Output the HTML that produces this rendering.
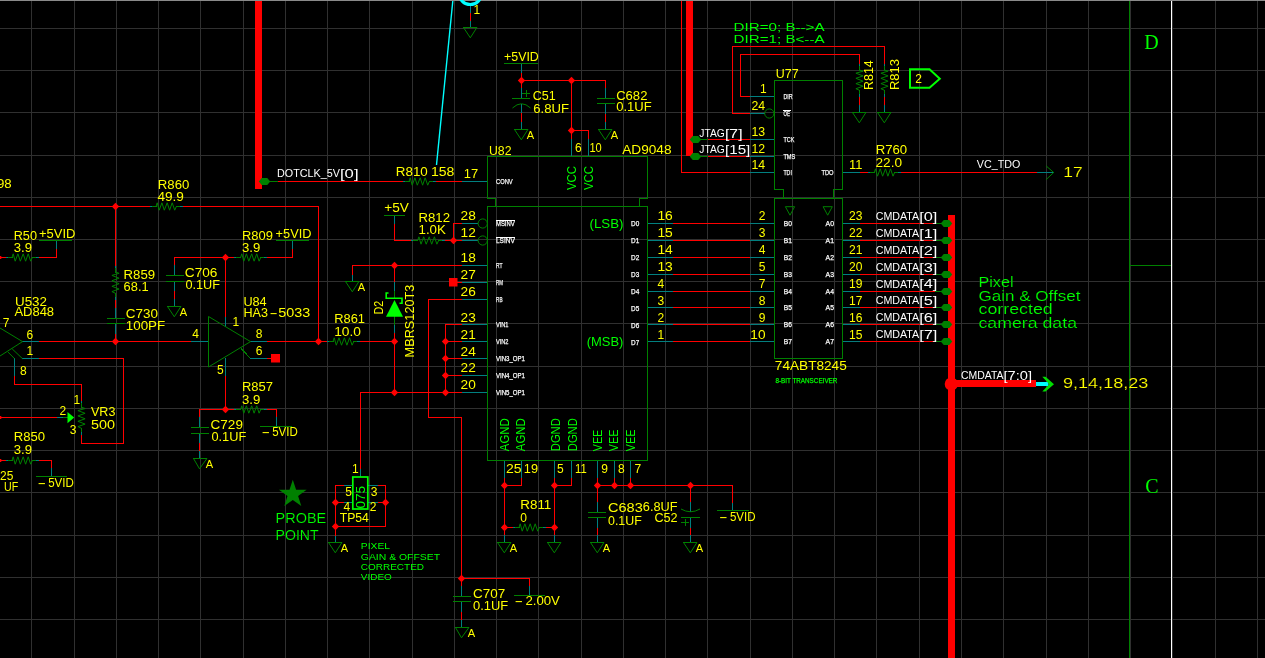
<!DOCTYPE html>
<html><head><meta charset="utf-8"><title>Schematic</title>
<style>html,body{margin:0;padding:0;background:#000;overflow:hidden}svg{display:block;will-change:transform}text{white-space:pre}</style></head><body>
<svg width="1265" height="658" viewBox="0 0 1265 658">
<rect width="1265" height="658" fill="#000"/>
<rect x="0" y="0" width="1265" height="1" fill="#8a8a8a"/>
<path d="M31.5 1V659M74.5 1V659M116.5 1V659M158.5 1V659M200.5 1V659M243.5 1V659M285.5 1V659M327.5 1V659M369.5 1V659M412.5 1V659M454.5 1V659M496.5 1V659M538.5 1V659M581.5 1V659M623.5 1V659M665.5 1V659M707.5 1V659M750.5 1V659M792.5 1V659M834.5 1V659M876.5 1V659M919.5 1V659M961.5 1V659M1003.5 1V659M1046.5 1V659M1088.5 1V659M1130.5 1V659M1172.5 1V659M1215.5 1V659M1257.5 1V659M0 28.5H1266M0 70.5H1266M0 112.5H1266M0 155.5H1266M0 197.5H1266M0 239.5H1266M0 281.5H1266M0 323.5H1266M0 366.5H1266M0 408.5H1266M0 450.5H1266M0 492.5H1266M0 535.5H1266M0 577.5H1266M0 619.5H1266" fill="none" stroke="#303030" stroke-width="1" shape-rendering="crispEdges"/>
<path d="M277 181.5H404M436 181.5H463M0 206.5H151M183 206.5H319M318.5 206V342M115.5 206V267M115.5 300V309M115.5 333V342M0 257.5H7M39 257.5H57M56.5 248V258M225 257.5H235M267 257.5H293M292.5 248V258M174 257.5H226M174.5 257V266M174.5 290V300M225.5 257V318M38 341.5H192M38 358.5H124M123.5 358V444M81 443.5H124M81.5 435V444M14.5 375V385M14 384.5H82M81.5 384V402M0 417.5H58M266 341.5H328M266 358.5H272M225.5 375V410M199 409.5H226M199.5 409V418M199.5 442V452M225 409.5H235M267 409.5H277M276.5 409V418M0 460.5H7M39 460.5H52M51.5 460V469M470.5 12V22M521.5 72V90M521 80.5H606M605.5 80V89M521.5 112V122M605.5 113V122M571.5 80V140M571 130.5H589M588.5 130V140M673 223.5H750M673 240.5H750M673 257.5H750M673 274.5H750M673 291.5H750M673 307.5H750M673 324.5H750M673 341.5H750M504.5 477V486M521.5 477V486M554.5 477V486M571.5 477V486M597.5 477V486M614.5 477V486M630.5 477V486M394.5 223V241M394 240.5H412M445 240.5H463M453.5 223V241M453 223.5H463M352 265.5H463M352.5 265V276M394.5 265V283M394.5 332V393M360 341.5H395M457 282.5H463M428 299.5H463M428.5 299V418M428 417.5H462M461.5 417V587M445 324.5H463M445.5 324V393M445 341.5H463M445 358.5H463M445 375.5H463M445 392.5H463M360 392.5H446M360.5 392V470M335 485.5H345M335.5 485V537M377 485.5H386M385.5 485V527M335 526.5H386M335 502.5H345M377 502.5H386M504 485.5H522M504.5 485V536M554 485.5H572M554.5 485V536M504 527.5H514M546 527.5H555M597 485.5H733M732.5 485V504M597.5 485V503M597.5 527V537M690.5 485V503M690.5 527V537M461 578.5H530M529.5 578V587M461.5 611V620M681.5 1V173M681 172.5H751M707 139.5H751M707 156.5H751M740 96.5H751M740.5 54V97M740 54.5H860M859.5 54V65M732 113.5H751M732.5 46V114M732 46.5H885M884.5 46V65M859.5 97V106M884.5 97V106M859 172.5H869M901 172.5H1037M859 223.5H936M859 240.5H936M859 257.5H936M859 274.5H936M859 291.5H936M859 307.5H936M859 324.5H936M859 341.5H936" fill="none" stroke="#ff0000" stroke-width="1" shape-rendering="crispEdges"/>
<path d="M403 181.5H406M433 181.5H436M462 181.5H488M150 206.5H153M180 206.5H183M115.5 266V269M115.5 297V300M115.5 308V319M115.5 323V334M6 257.5H9M36 257.5H39M56.5 241V249M234 257.5H237M264 257.5H267M292.5 241V249M174.5 265V276M174.5 281V291M174.5 299V307M225.5 317V327M22 341.5H39M191 341.5H209M22 358.5H39M14.5 358V376M81.5 401V404M81.5 432V435M57 417.5H64M250 341.5H267M250 358.5H267M225.5 358V376M199.5 417V428M199.5 433V443M199.5 451V459M234 409.5H237M264 409.5H267M276.5 417V427M6 460.5H9M36 460.5H39M51.5 468V477M470.5 5V13M470.5 21V28M521.5 63V73M521.5 88V99M521.5 104V113M521.5 122V130M605.5 88V99M605.5 103V114M605.5 122V130M571.5 139V157M588.5 139V157M462 223.5H478M462 240.5H478M462 265.5H488M462 282.5H488M462 299.5H488M462 324.5H488M462 341.5H488M462 358.5H488M462 375.5H488M462 392.5H488M648 223.5H673M750 223.5H775M648 240.5H673M750 240.5H775M648 257.5H673M750 257.5H775M648 274.5H673M750 274.5H775M648 291.5H673M750 291.5H775M648 307.5H673M750 307.5H775M648 324.5H673M750 324.5H775M648 341.5H673M750 341.5H775M504.5 460V478M521.5 460V478M554.5 460V478M571.5 460V478M597.5 460V478M614.5 460V478M630.5 460V478M394.5 215V224M411 240.5H414M442 240.5H445M352.5 275V282M394.5 282V292M394.5 324V333M327 341.5H330M357 341.5H360M360.5 469V477M335.5 536V543M344 485.5H353M368 485.5H378M344 502.5H353M368 502.5H378M513 527.5H516M543 527.5H546M504.5 535V543M554.5 535V543M732.5 503V511M597.5 502V513M597.5 517V528M597.5 535V543M690.5 502V512M690.5 517V528M690.5 535V543M529.5 586V596M461.5 586V597M461.5 601V612M461.5 620V628M750 172.5H775M750 139.5H775M750 156.5H775M750 96.5H775M750 113.5H765M859.5 64V67M859.5 94V97M859.5 105V113M884.5 64V67M884.5 94V97M884.5 105V113M843 172.5H860M868 172.5H871M898 172.5H901M1037 172.5H1054M843 223.5H860M843 240.5H860M843 257.5H860M843 274.5H860M843 291.5H860M843 307.5H860M843 324.5H860M843 341.5H860" fill="none" stroke="#008080" stroke-width="1" shape-rendering="crispEdges"/>
<path d="M1129.5 1V659M1129 265.5H1172M264 181.5H278M405 181.5H410M429 181.5H433M152 206.5H157M176 206.5H180M115.5 268V273M115.5 293V297M107 318.5H125M107 323.5H125M8 257.5H13M32 257.5H36M39 240.5H72M236 257.5H241M260 257.5H264M276 240.5H309M166 275.5H184M166 281.5H184M167 306.5H181M81.5 403V408M81.5 428V432M63 417.5H68M240.7 347.9L250.3 358.3M191 427.5H209M191 433.5H209M193 458.5H207M236 409.5H241M260 409.5H264M260 426.5H292M8 460.5H13M32 460.5H36M36 476.5H67M463 27.5H477M504 63.5H538M512 98.5H530M514 129.5H528M597 98.5H615M597 103.5H615M598 129.5H612M384 215.5H405M413 240.5H418M438 240.5H442M345 281.5H359M394.5 291V299M394.5 316V325M329 341.5H334M353 341.5H357M328 542.5H342M515 527.5H520M539 527.5H543M497 542.5H511M547 542.5H561M717 510.5H749M588 512.5H606M588 517.5H606M590 542.5H604M681 517.5H700M683 542.5H697M514 595.5H545M453 596.5H471M453 601.5H471M455 627.5H469M695 139.5H708M695 156.5H708M859.5 66V71M859.5 90V94M852 112.5H866M884.5 66V71M884.5 90V94M877 112.5H891M870 172.5H875M894 172.5H898M935 223.5H943M935 240.5H943M935 257.5H943M935 274.5H943M935 291.5H943M935 307.5H943M935 324.5H943M935 341.5H943" fill="none" stroke="#008000" stroke-width="1" shape-rendering="crispEdges"/>
<path d="M1171.5 1V659M496 220.5H515M496 237.5H515M783 110.5H791" fill="none" stroke="#ffffff" stroke-width="1" shape-rendering="crispEdges"/>
<rect x="255" y="1" width="7" height="188" fill="#ff0000"/>
<rect x="686" y="1" width="7" height="155" fill="#ff0000"/>
<rect x="948" y="215" width="7" height="443" fill="#ff0000"/>
<rect x="951" y="380" width="85" height="7" fill="#ff0000"/>
<circle cx="951.3" cy="384" r="6.6" fill="#ff0000"/>
<rect x="1036" y="382" width="12.5" height="4" fill="#00ffff"/>
<path d="M1042.3 376.8L1045.5 376.8L1054 384.2L1045.5 391.6L1042.3 391.6L1049.3 384.2Z" fill="#00dd00"/>
<path d="M409.0 181.5L410.2 177.8L412.2 185.2L414.9 177.8L417.3 185.2L420.2 177.8L422.6 185.2L425.2 177.8L427.7 185.2L429.3 181.5" fill="none" stroke="#008000" stroke-width="1"/>
<path d="M258.75 181.5l3 -3.5h5.5l3 3.5l-3 3.5h-5.5z" fill="#008000"/>
<path d="M115.5 202.8l3.7 3.7l-3.7 3.7l-3.7 -3.7z" fill="#ff0000"/>
<path d="M156.0 206.5L157.2 202.8L159.2 210.2L161.9 202.8L164.3 210.2L167.2 202.8L169.6 210.2L172.2 202.8L174.7 210.2L176.3 206.5" fill="none" stroke="#008000" stroke-width="1"/>
<path d="M115.5 272.0L119.1 273.3L111.9 275.4L119.1 278.2L111.9 280.7L119.1 283.7L111.9 286.3L119.1 289.0L111.9 291.6L115.5 293.3" fill="none" stroke="#008000" stroke-width="1"/>
<rect x="0" y="256" width="1.3" height="3" fill="#ff0000"/>
<path d="M12.0 257.5L13.2 253.8L15.2 261.2L17.9 253.8L20.3 261.2L23.2 253.8L25.6 261.2L28.2 253.8L30.7 261.2L32.3 257.5" fill="none" stroke="#008000" stroke-width="1"/>
<path d="M225.5 253.8l3.7 3.7l-3.7 3.7l-3.7 -3.7z" fill="#ff0000"/>
<path d="M240.6 257.5L241.8 253.8L243.8 261.2L246.4 253.8L248.8 261.2L251.7 253.8L254.1 261.2L256.7 253.8L259.1 261.2L260.7 257.5" fill="none" stroke="#008000" stroke-width="1"/>
<path d="M167.5 306.5L174.3 316.8L180.9 306.5" fill="none" stroke="#008000" stroke-width="1"/>
<path d="M208.5 316.5V367L250.5 341.6Z" fill="none" stroke="#008000" stroke-width="1"/>
<path d="M0 328L22.5 341.6L0 356M12.2 348.9L22.5 358.7M7.9 352L14.6 358.7" fill="none" stroke="#008000" stroke-width="1"/>
<path d="M115.5 337.8l3.7 3.7l-3.7 3.7l-3.7 -3.7z" fill="#ff0000"/>
<path d="M81.5 407.2L85.1 408.5L77.9 410.6L85.1 413.3L77.9 415.9L85.1 418.8L77.9 421.3L85.1 424.1L77.9 426.6L81.5 428.3" fill="none" stroke="#008000" stroke-width="1"/>
<rect x="0" y="416" width="1.3" height="3" fill="#ff0000"/>
<path d="M67.5 412L74.2 417.6L67.5 423.2Z" fill="#00ff00"/>
<path d="M318.5 337.8l3.7 3.7l-3.7 3.7l-3.7 -3.7z" fill="#ff0000"/>
<rect x="271" y="354" width="9" height="8.5" fill="#ff0000"/>
<path d="M225.5 405.8l3.7 3.7l-3.7 3.7l-3.7 -3.7z" fill="#ff0000"/>
<path d="M193.5 458.5L199.5 468.8L206.9 458.5" fill="none" stroke="#008000" stroke-width="1"/>
<path d="M240.6 409.5L241.8 405.8L243.8 413.2L246.4 405.8L248.8 413.2L251.7 405.8L254.1 413.2L256.7 405.8L259.1 413.2L260.7 409.5" fill="none" stroke="#008000" stroke-width="1"/>
<rect x="0" y="459" width="1.3" height="3" fill="#ff0000"/>
<path d="M12.0 460.5L13.2 456.8L15.2 464.2L17.9 456.8L20.3 464.2L23.2 456.8L25.6 464.2L28.2 456.8L30.7 464.2L32.3 460.5" fill="none" stroke="#008000" stroke-width="1"/>
<path d="M292.8 479.8L296.1 489.8L306.6 489.8L298.1 496.0L301.3 506.0L292.8 499.9L284.3 506.0L287.5 496.0L279.0 489.8L289.5 489.8Z" fill="#008000"/>
<circle cx="470.3" cy="-6.6" r="11.2" fill="none" stroke="#00ffff" stroke-width="3"/>
<path d="M452.8 1L436.5 165" stroke="#00ffff" stroke-width="1.4" fill="none"/>
<path d="M463.5 27.5L470.3 37.8L476.9 27.5" fill="none" stroke="#008000" stroke-width="1"/>
<path d="M521.5 76.8l3.7 3.7l-3.7 3.7l-3.7 -3.7z" fill="#ff0000"/>
<path d="M571.5 76.8l3.7 3.7l-3.7 3.7l-3.7 -3.7z" fill="#ff0000"/>
<path d="M512.5 108Q521.5 99.5 530.5 108" fill="none" stroke="#008000" stroke-width="1"/>
<path d="M522 93.5h8M526.5 90v7" fill="none" stroke="#008000" stroke-width="1" shape-rendering="crispEdges"/>
<path d="M514.5 129.5L521.3 139.8L527.9 129.5" fill="none" stroke="#008000" stroke-width="1"/>
<path d="M598.5 129.5L605.3 139.8L611.9 129.5" fill="none" stroke="#008000" stroke-width="1"/>
<path d="M571.5 126.8l3.7 3.7l-3.7 3.7l-3.7 -3.7z" fill="#ff0000"/>
<path d="M487.5 156.5H647.5V198.5H639.5V206.5H647.5V460.5H487.5V206.5H495.5V198.5H487.5Z M495.5 206.5H639.5" fill="none" stroke="#008000" stroke-width="1" shape-rendering="crispEdges"/>
<circle cx="482.7" cy="223.5" r="4.6" fill="none" stroke="#008000" stroke-width="1"/>
<circle cx="482.7" cy="240.5" r="4.6" fill="none" stroke="#008000" stroke-width="1"/>
<path d="M417.6 240.5L418.9 236.8L421.0 244.2L423.7 236.8L426.2 244.2L429.2 236.8L431.7 244.2L434.4 236.8L436.9 244.2L438.6 240.5" fill="none" stroke="#008000" stroke-width="1"/>
<path d="M453.5 236.8l3.7 3.7l-3.7 3.7l-3.7 -3.7z" fill="#ff0000"/>
<path d="M394.5 261.8l3.7 3.7l-3.7 3.7l-3.7 -3.7z" fill="#ff0000"/>
<path d="M345.5 281.5L352.3 291.8L358.9 281.5" fill="none" stroke="#008000" stroke-width="1"/>
<path d="M388.5 293H386.2V298.2H402V303.2H399.5" fill="none" stroke="#00ff00" stroke-width="1.6"/>
<path d="M394.5 300L403 316.8H386Z" fill="#00ff00"/>
<path d="M394.5 337.8l3.7 3.7l-3.7 3.7l-3.7 -3.7z" fill="#ff0000"/>
<path d="M394.5 388.8l3.7 3.7l-3.7 3.7l-3.7 -3.7z" fill="#ff0000"/>
<path d="M333.0 341.5L334.2 337.8L336.3 345.2L339.0 337.8L341.5 345.2L344.4 337.8L346.9 345.2L349.6 337.8L352.1 345.2L353.8 341.5" fill="none" stroke="#008000" stroke-width="1"/>
<rect x="449" y="278" width="8.5" height="8.5" fill="#ff0000"/>
<path d="M445.5 337.8l3.7 3.7l-3.7 3.7l-3.7 -3.7z" fill="#ff0000"/>
<path d="M445.5 354.8l3.7 3.7l-3.7 3.7l-3.7 -3.7z" fill="#ff0000"/>
<path d="M445.5 371.8l3.7 3.7l-3.7 3.7l-3.7 -3.7z" fill="#ff0000"/>
<path d="M445.5 388.8l3.7 3.7l-3.7 3.7l-3.7 -3.7z" fill="#ff0000"/>
<rect x="352.8" y="477" width="15" height="32" fill="none" stroke="#00ff00" stroke-width="1.7"/>
<path d="M335.5 498.8l3.7 3.7l-3.7 3.7l-3.7 -3.7z" fill="#ff0000"/>
<path d="M385.5 498.8l3.7 3.7l-3.7 3.7l-3.7 -3.7z" fill="#ff0000"/>
<path d="M335.5 522.8l3.7 3.7l-3.7 3.7l-3.7 -3.7z" fill="#ff0000"/>
<path d="M328.5 542.5L335.3 552.8L341.9 542.5" fill="none" stroke="#008000" stroke-width="1"/>
<path d="M504.5 481.8l3.7 3.7l-3.7 3.7l-3.7 -3.7z" fill="#ff0000"/>
<path d="M504.5 523.8l3.7 3.7l-3.7 3.7l-3.7 -3.7z" fill="#ff0000"/>
<path d="M554.5 481.8l3.7 3.7l-3.7 3.7l-3.7 -3.7z" fill="#ff0000"/>
<path d="M554.5 523.8l3.7 3.7l-3.7 3.7l-3.7 -3.7z" fill="#ff0000"/>
<path d="M519.0 527.5L520.2 523.8L522.2 531.2L524.9 523.8L527.3 531.2L530.2 523.8L532.6 531.2L535.2 523.8L537.7 531.2L539.3 527.5" fill="none" stroke="#008000" stroke-width="1"/>
<path d="M497.5 542.5L504.3 552.8L510.9 542.5" fill="none" stroke="#008000" stroke-width="1"/>
<path d="M547.5 542.5L554.3 552.8L560.9 542.5" fill="none" stroke="#008000" stroke-width="1"/>
<path d="M597.5 481.8l3.7 3.7l-3.7 3.7l-3.7 -3.7z" fill="#ff0000"/>
<path d="M614.5 481.8l3.7 3.7l-3.7 3.7l-3.7 -3.7z" fill="#ff0000"/>
<path d="M630.5 481.8l3.7 3.7l-3.7 3.7l-3.7 -3.7z" fill="#ff0000"/>
<path d="M690.5 481.8l3.7 3.7l-3.7 3.7l-3.7 -3.7z" fill="#ff0000"/>
<path d="M590.5 542.5L597.3 552.8L603.9 542.5" fill="none" stroke="#008000" stroke-width="1"/>
<path d="M681 509Q690.5 514.5 700 509" fill="none" stroke="#008000" stroke-width="1"/>
<path d="M683.5 542.5L690.3 552.8L696.9 542.5" fill="none" stroke="#008000" stroke-width="1"/>
<path d="M681 522.5h8M685.5 519v7" fill="none" stroke="#008000" stroke-width="1" shape-rendering="crispEdges"/>
<path d="M461.5 574.8l3.7 3.7l-3.7 3.7l-3.7 -3.7z" fill="#ff0000"/>
<path d="M455.5 627.5L461.5 637.8L468.9 627.5" fill="none" stroke="#008000" stroke-width="1"/>
<path d="M774.5 80.5H842.5V189.5H833.5V198.5H842.5V358.5H774.5V198.5H783.5V189.5H774.5Z M783.5 198.5H833.5" fill="none" stroke="#008000" stroke-width="1" shape-rendering="crispEdges"/>
<path d="M689.75 139.5l3 -3.5h5.5l3 3.5l-3 3.5h-5.5z" fill="#008000"/>
<path d="M689.75 156.5l3 -3.5h5.5l3 3.5l-3 3.5h-5.5z" fill="#008000"/>
<circle cx="769.3" cy="113.5" r="4.6" fill="none" stroke="#008000" stroke-width="1"/>
<path d="M859.5 70.0L863.1 71.2L855.9 73.2L863.1 75.9L855.9 78.3L863.1 81.2L855.9 83.6L863.1 86.2L855.9 88.7L859.5 90.3" fill="none" stroke="#008000" stroke-width="1"/>
<path d="M852.5 112.5L859.3 122.8L865.9 112.5" fill="none" stroke="#008000" stroke-width="1"/>
<path d="M884.5 70.0L888.1 71.2L880.9 73.2L888.1 75.9L880.9 78.3L888.1 81.2L880.9 83.6L888.1 86.2L880.9 88.7L884.5 90.3" fill="none" stroke="#008000" stroke-width="1"/>
<path d="M877.5 112.5L884.3 122.8L890.9 112.5" fill="none" stroke="#008000" stroke-width="1"/>
<path d="M910 69.3H929.5L939.8 78.7L929.5 87.8H910Z" fill="none" stroke="#00ff00" stroke-width="2"/>
<path d="M874.3 172.5L875.5 168.8L877.5 176.2L880.2 168.8L882.6 176.2L885.5 168.8L887.9 176.2L890.5 168.8L893.0 176.2L894.6 172.5" fill="none" stroke="#008000" stroke-width="1"/>
<path d="M1046 165.8L1053.7 172.5L1046 179.7" fill="none" stroke="#008000" stroke-width="1"/>
<path d="M785.4 206.7H794.6L790 215.2Z" fill="none" stroke="#008000" stroke-width="1"/>
<path d="M823.1 206.7H832.3L827.7 215.2Z" fill="none" stroke="#008000" stroke-width="1"/>
<path d="M940.75 223.5l3 -3.5h5.5l3 3.5l-3 3.5h-5.5z" fill="#008000"/>
<path d="M940.75 240.5l3 -3.5h5.5l3 3.5l-3 3.5h-5.5z" fill="#008000"/>
<path d="M940.75 257.5l3 -3.5h5.5l3 3.5l-3 3.5h-5.5z" fill="#008000"/>
<path d="M940.75 274.5l3 -3.5h5.5l3 3.5l-3 3.5h-5.5z" fill="#008000"/>
<path d="M940.75 291.5l3 -3.5h5.5l3 3.5l-3 3.5h-5.5z" fill="#008000"/>
<path d="M940.75 307.5l3 -3.5h5.5l3 3.5l-3 3.5h-5.5z" fill="#008000"/>
<path d="M940.75 324.5l3 -3.5h5.5l3 3.5l-3 3.5h-5.5z" fill="#008000"/>
<path d="M940.75 341.5l3 -3.5h5.5l3 3.5l-3 3.5h-5.5z" fill="#008000"/>
<text x="1144.3" y="48.6" font-size="20" fill="#00ff00" font-family='"Liberation Serif",serif'>D</text>
<text x="1145.3" y="493" font-size="20" fill="#00ff00" font-family='"Liberation Serif",serif'>C</text>
<text x="277" y="177" font-size="10.6" fill="#ffffff" font-family='"Liberation Sans",sans-serif' textLength="63" lengthAdjust="spacingAndGlyphs">DOTCLK_5V</text>
<text x="340" y="178" font-size="12" fill="#ffffff" font-family='"Liberation Sans",sans-serif' textLength="18.5" lengthAdjust="spacingAndGlyphs">[0]</text>
<text x="395.8" y="175.6" font-size="12" fill="#ffff00" font-family='"Liberation Sans",sans-serif' textLength="32" lengthAdjust="spacingAndGlyphs">R810</text>
<text x="431" y="175.6" font-size="12" fill="#ffff00" font-family='"Liberation Sans",sans-serif' textLength="23.4" lengthAdjust="spacingAndGlyphs">158</text>
<text x="463.8" y="178.3" font-size="12" fill="#ffff00" font-family='"Liberation Sans",sans-serif' textLength="14.4" lengthAdjust="spacingAndGlyphs">17</text>
<text x="-3" y="188.2" font-size="12" fill="#ffff00" font-family='"Liberation Sans",sans-serif' textLength="14.7" lengthAdjust="spacingAndGlyphs">98</text>
<text x="157.8" y="188.6" font-size="12" fill="#ffff00" font-family='"Liberation Sans",sans-serif' textLength="31.5" lengthAdjust="spacingAndGlyphs">R860</text>
<text x="157.4" y="200.6" font-size="12" fill="#ffff00" font-family='"Liberation Sans",sans-serif' textLength="26.5" lengthAdjust="spacingAndGlyphs">49.9</text>
<text x="123.6" y="279" font-size="12" fill="#ffff00" font-family='"Liberation Sans",sans-serif' textLength="31.5" lengthAdjust="spacingAndGlyphs">R859</text>
<text x="123.6" y="291.3" font-size="12" fill="#ffff00" font-family='"Liberation Sans",sans-serif' textLength="25" lengthAdjust="spacingAndGlyphs">68.1</text>
<text x="125.8" y="318.1" font-size="12" fill="#ffff00" font-family='"Liberation Sans",sans-serif' textLength="32.2" lengthAdjust="spacingAndGlyphs">C730</text>
<text x="125.8" y="330" font-size="12" fill="#ffff00" font-family='"Liberation Sans",sans-serif' textLength="39.4" lengthAdjust="spacingAndGlyphs">100PF</text>
<text x="13.7" y="239.6" font-size="12.3" fill="#ffff00" font-family='"Liberation Sans",sans-serif' textLength="23.3" lengthAdjust="spacingAndGlyphs">R50</text>
<text x="39" y="238" font-size="12.3" fill="#ffff00" font-family='"Liberation Sans",sans-serif' textLength="36.4" lengthAdjust="spacingAndGlyphs">+5VID</text>
<text x="13.7" y="251.9" font-size="12.3" fill="#ffff00" font-family='"Liberation Sans",sans-serif' textLength="18.3" lengthAdjust="spacingAndGlyphs">3.9</text>
<text x="242" y="239.6" font-size="12.3" fill="#ffff00" font-family='"Liberation Sans",sans-serif' textLength="31" lengthAdjust="spacingAndGlyphs">R809</text>
<text x="275.6" y="238" font-size="12.3" fill="#ffff00" font-family='"Liberation Sans",sans-serif' textLength="35.8" lengthAdjust="spacingAndGlyphs">+5VID</text>
<text x="242" y="251.9" font-size="12.3" fill="#ffff00" font-family='"Liberation Sans",sans-serif' textLength="18.3" lengthAdjust="spacingAndGlyphs">3.9</text>
<text x="179.8" y="316" font-size="10.5" fill="#ffff00" font-family='"Liberation Sans",sans-serif' textLength="7.4" lengthAdjust="spacingAndGlyphs">A</text>
<text x="184.8" y="277" font-size="12" fill="#ffff00" font-family='"Liberation Sans",sans-serif' textLength="32.6" lengthAdjust="spacingAndGlyphs">C706</text>
<text x="185.4" y="288.6" font-size="12" fill="#ffff00" font-family='"Liberation Sans",sans-serif' textLength="34.6" lengthAdjust="spacingAndGlyphs">0.1UF</text>
<text x="232.5" y="326.3" font-size="12" fill="#ffff00" font-family='"Liberation Sans",sans-serif'>1</text>
<text x="243.4" y="306.3" font-size="12" fill="#ffff00" font-family='"Liberation Sans",sans-serif' textLength="23.3" lengthAdjust="spacingAndGlyphs">U84</text>
<text x="243.4" y="316.5" font-size="12" fill="#ffff00" font-family='"Liberation Sans",sans-serif' textLength="24.5" lengthAdjust="spacingAndGlyphs">HA3</text>
<text x="269.6" y="316.5" font-size="12" fill="#ffff00" font-family='"Liberation Sans",sans-serif' textLength="8.2" lengthAdjust="spacingAndGlyphs">-</text>
<text x="278.3" y="316.5" font-size="12" fill="#ffff00" font-family='"Liberation Sans",sans-serif' textLength="32" lengthAdjust="spacingAndGlyphs">5033</text>
<text x="15" y="306.3" font-size="12" fill="#ffff00" font-family='"Liberation Sans",sans-serif' textLength="32" lengthAdjust="spacingAndGlyphs">U532</text>
<text x="14.4" y="316.3" font-size="12" fill="#ffff00" font-family='"Liberation Sans",sans-serif' textLength="39.7" lengthAdjust="spacingAndGlyphs">AD848</text>
<text x="2.7" y="326.8" font-size="12" fill="#ffff00" font-family='"Liberation Sans",sans-serif'>7</text>
<text x="26.5" y="338.6" font-size="12" fill="#ffff00" font-family='"Liberation Sans",sans-serif'>6</text>
<text x="26.5" y="354.8" font-size="12" fill="#ffff00" font-family='"Liberation Sans",sans-serif'>1</text>
<text x="20" y="374.5" font-size="12" fill="#ffff00" font-family='"Liberation Sans",sans-serif'>8</text>
<text x="192.3" y="337.7" font-size="12" fill="#ffff00" font-family='"Liberation Sans",sans-serif'>4</text>
<text x="73.5" y="404" font-size="12" fill="#ffff00" font-family='"Liberation Sans",sans-serif'>1</text>
<text x="59.6" y="414.9" font-size="12" fill="#ffff00" font-family='"Liberation Sans",sans-serif'>2</text>
<text x="69.7" y="433.5" font-size="12" fill="#ffff00" font-family='"Liberation Sans",sans-serif'>3</text>
<text x="91" y="416.2" font-size="12" fill="#ffff00" font-family='"Liberation Sans",sans-serif' textLength="24.4" lengthAdjust="spacingAndGlyphs">VR3</text>
<text x="91" y="428.6" font-size="12" fill="#ffff00" font-family='"Liberation Sans",sans-serif' textLength="24" lengthAdjust="spacingAndGlyphs">500</text>
<text x="255.7" y="337.7" font-size="12" fill="#ffff00" font-family='"Liberation Sans",sans-serif'>8</text>
<text x="255.7" y="354.7" font-size="12" fill="#ffff00" font-family='"Liberation Sans",sans-serif'>6</text>
<text x="217" y="374.4" font-size="12" fill="#ffff00" font-family='"Liberation Sans",sans-serif'>5</text>
<text x="205.8" y="468" font-size="10.5" fill="#ffff00" font-family='"Liberation Sans",sans-serif' textLength="7.4" lengthAdjust="spacingAndGlyphs">A</text>
<text x="210.6" y="429.1" font-size="12" fill="#ffff00" font-family='"Liberation Sans",sans-serif' textLength="32.3" lengthAdjust="spacingAndGlyphs">C729</text>
<text x="211.4" y="440.7" font-size="12" fill="#ffff00" font-family='"Liberation Sans",sans-serif' textLength="34.8" lengthAdjust="spacingAndGlyphs">0.1UF</text>
<text x="242" y="391" font-size="12" fill="#ffff00" font-family='"Liberation Sans",sans-serif' textLength="31" lengthAdjust="spacingAndGlyphs">R857</text>
<text x="242" y="404" font-size="12" fill="#ffff00" font-family='"Liberation Sans",sans-serif' textLength="18.3" lengthAdjust="spacingAndGlyphs">3.9</text>
<text x="261.4" y="436.2" font-size="12" fill="#ffff00" font-family='"Liberation Sans",sans-serif' textLength="8.6" lengthAdjust="spacingAndGlyphs">-</text>
<text x="272.2" y="436.2" font-size="12" fill="#ffff00" font-family='"Liberation Sans",sans-serif' textLength="25.6" lengthAdjust="spacingAndGlyphs">5VID</text>
<text x="13.7" y="440.9" font-size="12" fill="#ffff00" font-family='"Liberation Sans",sans-serif' textLength="31.3" lengthAdjust="spacingAndGlyphs">R850</text>
<text x="13.7" y="453.5" font-size="12" fill="#ffff00" font-family='"Liberation Sans",sans-serif' textLength="18.3" lengthAdjust="spacingAndGlyphs">3.9</text>
<text x="37.4" y="487.4" font-size="12" fill="#ffff00" font-family='"Liberation Sans",sans-serif' textLength="8.6" lengthAdjust="spacingAndGlyphs">-</text>
<text x="48.2" y="487.4" font-size="12" fill="#ffff00" font-family='"Liberation Sans",sans-serif' textLength="25.6" lengthAdjust="spacingAndGlyphs">5VID</text>
<text x="0" y="479.8" font-size="12" fill="#ffff00" font-family='"Liberation Sans",sans-serif' textLength="13.3" lengthAdjust="spacingAndGlyphs">25</text>
<text x="4" y="490.5" font-size="12" fill="#ffff00" font-family='"Liberation Sans",sans-serif' textLength="14.2" lengthAdjust="spacingAndGlyphs">UF</text>
<text x="275.6" y="523.3" font-size="14" fill="#00ff00" font-family='"Liberation Sans",sans-serif' textLength="50.6" lengthAdjust="spacingAndGlyphs" stroke="#000" stroke-width="0.15">PROBE</text>
<text x="275.6" y="539.8" font-size="14" fill="#00ff00" font-family='"Liberation Sans",sans-serif' textLength="43" lengthAdjust="spacingAndGlyphs" stroke="#000" stroke-width="0.15">POINT</text>
<text x="473.6" y="14" font-size="12" fill="#ffff00" font-family='"Liberation Sans",sans-serif'>1</text>
<text x="504" y="60.7" font-size="12" fill="#ffff00" font-family='"Liberation Sans",sans-serif' textLength="34.8" lengthAdjust="spacingAndGlyphs">+5VID</text>
<text x="526.8" y="139" font-size="10.5" fill="#ffff00" font-family='"Liberation Sans",sans-serif' textLength="7.4" lengthAdjust="spacingAndGlyphs">A</text>
<text x="532.8" y="100.4" font-size="12" fill="#ffff00" font-family='"Liberation Sans",sans-serif' textLength="23" lengthAdjust="spacingAndGlyphs">C51</text>
<text x="533.3" y="112.6" font-size="12" fill="#ffff00" font-family='"Liberation Sans",sans-serif' textLength="35.8" lengthAdjust="spacingAndGlyphs">6.8UF</text>
<text x="610.8" y="139" font-size="10.5" fill="#ffff00" font-family='"Liberation Sans",sans-serif' textLength="7.4" lengthAdjust="spacingAndGlyphs">A</text>
<text x="616.2" y="100" font-size="12" fill="#ffff00" font-family='"Liberation Sans",sans-serif' textLength="31.2" lengthAdjust="spacingAndGlyphs">C682</text>
<text x="616.2" y="111" font-size="12" fill="#ffff00" font-family='"Liberation Sans",sans-serif' textLength="35.6" lengthAdjust="spacingAndGlyphs">0.1UF</text>
<text x="575" y="151.8" font-size="12" fill="#ffff00" font-family='"Liberation Sans",sans-serif'>6</text>
<text x="589.4" y="151.8" font-size="12" fill="#ffff00" font-family='"Liberation Sans",sans-serif' textLength="12.3" lengthAdjust="spacingAndGlyphs">10</text>
<text x="489" y="154.5" font-size="12" fill="#ffff00" font-family='"Liberation Sans",sans-serif' textLength="22.5" lengthAdjust="spacingAndGlyphs">U82</text>
<text x="622.2" y="154.3" font-size="12" fill="#ffff00" font-family='"Liberation Sans",sans-serif' textLength="49.4" lengthAdjust="spacingAndGlyphs">AD9048</text>
<text x="496" y="183.7" font-size="7.8" fill="#ffffff" font-family='"Liberation Sans",sans-serif' textLength="16.7" lengthAdjust="spacingAndGlyphs" stroke="#ffffff" stroke-width="0.25">CONV</text>
<text x="576" y="190" font-size="12" fill="#00ff00" font-family='"Liberation Sans",sans-serif' textLength="24" lengthAdjust="spacingAndGlyphs" transform="rotate(-90 576 190)">VCC</text>
<text x="592.8" y="190" font-size="12" fill="#00ff00" font-family='"Liberation Sans",sans-serif' textLength="24" lengthAdjust="spacingAndGlyphs" transform="rotate(-90 592.8 190)">VCC</text>
<text x="589.5" y="227.8" font-size="12.5" fill="#00ff00" font-family='"Liberation Sans",sans-serif' textLength="34" lengthAdjust="spacingAndGlyphs">(LSB)</text>
<text x="586.7" y="345.9" font-size="12.5" fill="#00ff00" font-family='"Liberation Sans",sans-serif' textLength="36.7" lengthAdjust="spacingAndGlyphs">(MSB)</text>
<text x="460.6" y="220.4" font-size="12" fill="#ffff00" font-family='"Liberation Sans",sans-serif' textLength="15.2" lengthAdjust="spacingAndGlyphs">28</text>
<text x="496" y="226.1" font-size="7.8" fill="#ffffff" font-family='"Liberation Sans",sans-serif' textLength="18.7" lengthAdjust="spacingAndGlyphs" stroke="#ffffff" stroke-width="0.25">MSINV</text>
<text x="460.6" y="237.3" font-size="12" fill="#ffff00" font-family='"Liberation Sans",sans-serif' textLength="15.2" lengthAdjust="spacingAndGlyphs">12</text>
<text x="496" y="243" font-size="7.8" fill="#ffffff" font-family='"Liberation Sans",sans-serif' textLength="18.7" lengthAdjust="spacingAndGlyphs" stroke="#ffffff" stroke-width="0.25">LSINV</text>
<text x="460.6" y="262.3" font-size="12" fill="#ffff00" font-family='"Liberation Sans",sans-serif' textLength="15.2" lengthAdjust="spacingAndGlyphs">18</text>
<text x="496" y="268" font-size="7.8" fill="#ffffff" font-family='"Liberation Sans",sans-serif' textLength="6.5" lengthAdjust="spacingAndGlyphs" stroke="#ffffff" stroke-width="0.25">RT</text>
<text x="460.6" y="279.2" font-size="12" fill="#ffff00" font-family='"Liberation Sans",sans-serif' textLength="15.2" lengthAdjust="spacingAndGlyphs">27</text>
<text x="496" y="284.9" font-size="7.8" fill="#ffffff" font-family='"Liberation Sans",sans-serif' textLength="7" lengthAdjust="spacingAndGlyphs" stroke="#ffffff" stroke-width="0.25">RM</text>
<text x="460.6" y="296.2" font-size="12" fill="#ffff00" font-family='"Liberation Sans",sans-serif' textLength="15.2" lengthAdjust="spacingAndGlyphs">26</text>
<text x="496" y="301.9" font-size="7.8" fill="#ffffff" font-family='"Liberation Sans",sans-serif' textLength="6.5" lengthAdjust="spacingAndGlyphs" stroke="#ffffff" stroke-width="0.25">RB</text>
<text x="460.6" y="321.6" font-size="12" fill="#ffff00" font-family='"Liberation Sans",sans-serif' textLength="15.2" lengthAdjust="spacingAndGlyphs">23</text>
<text x="496" y="327.3" font-size="7.8" fill="#ffffff" font-family='"Liberation Sans",sans-serif' textLength="12.5" lengthAdjust="spacingAndGlyphs" stroke="#ffffff" stroke-width="0.25">VIN1</text>
<text x="460.6" y="338.6" font-size="12" fill="#ffff00" font-family='"Liberation Sans",sans-serif' textLength="15.2" lengthAdjust="spacingAndGlyphs">21</text>
<text x="496" y="344.3" font-size="7.8" fill="#ffffff" font-family='"Liberation Sans",sans-serif' textLength="12.5" lengthAdjust="spacingAndGlyphs" stroke="#ffffff" stroke-width="0.25">VIN2</text>
<text x="460.6" y="355.5" font-size="12" fill="#ffff00" font-family='"Liberation Sans",sans-serif' textLength="15.2" lengthAdjust="spacingAndGlyphs">24</text>
<text x="496" y="361.2" font-size="7.8" fill="#ffffff" font-family='"Liberation Sans",sans-serif' textLength="29" lengthAdjust="spacingAndGlyphs" stroke="#ffffff" stroke-width="0.25">VIN3_OP1</text>
<text x="460.6" y="372.3" font-size="12" fill="#ffff00" font-family='"Liberation Sans",sans-serif' textLength="15.2" lengthAdjust="spacingAndGlyphs">22</text>
<text x="496" y="378" font-size="7.8" fill="#ffffff" font-family='"Liberation Sans",sans-serif' textLength="29" lengthAdjust="spacingAndGlyphs" stroke="#ffffff" stroke-width="0.25">VIN4_OP1</text>
<text x="460.6" y="389.3" font-size="12" fill="#ffff00" font-family='"Liberation Sans",sans-serif' textLength="15.2" lengthAdjust="spacingAndGlyphs">20</text>
<text x="496" y="395" font-size="7.8" fill="#ffffff" font-family='"Liberation Sans",sans-serif' textLength="29" lengthAdjust="spacingAndGlyphs" stroke="#ffffff" stroke-width="0.25">VIN5_OP1</text>
<text x="631" y="226.3" font-size="7.8" fill="#ffffff" font-family='"Liberation Sans",sans-serif' textLength="8.2" lengthAdjust="spacingAndGlyphs" stroke="#ffffff" stroke-width="0.25">D0</text>
<text x="657.4" y="220.2" font-size="12" fill="#ffff00" font-family='"Liberation Sans",sans-serif' textLength="15.4" lengthAdjust="spacingAndGlyphs">16</text>
<text x="758.7" y="220.2" font-size="12" fill="#ffff00" font-family='"Liberation Sans",sans-serif'>2</text>
<text x="631" y="243.2" font-size="7.8" fill="#ffffff" font-family='"Liberation Sans",sans-serif' textLength="8.2" lengthAdjust="spacingAndGlyphs" stroke="#ffffff" stroke-width="0.25">D1</text>
<text x="657.4" y="237.1" font-size="12" fill="#ffff00" font-family='"Liberation Sans",sans-serif' textLength="15.4" lengthAdjust="spacingAndGlyphs">15</text>
<text x="758.7" y="237.1" font-size="12" fill="#ffff00" font-family='"Liberation Sans",sans-serif'>3</text>
<text x="631" y="260.1" font-size="7.8" fill="#ffffff" font-family='"Liberation Sans",sans-serif' textLength="8.2" lengthAdjust="spacingAndGlyphs" stroke="#ffffff" stroke-width="0.25">D2</text>
<text x="657.4" y="254" font-size="12" fill="#ffff00" font-family='"Liberation Sans",sans-serif' textLength="15.4" lengthAdjust="spacingAndGlyphs">14</text>
<text x="758.7" y="254" font-size="12" fill="#ffff00" font-family='"Liberation Sans",sans-serif'>4</text>
<text x="631" y="277" font-size="7.8" fill="#ffffff" font-family='"Liberation Sans",sans-serif' textLength="8.2" lengthAdjust="spacingAndGlyphs" stroke="#ffffff" stroke-width="0.25">D3</text>
<text x="657.4" y="270.9" font-size="12" fill="#ffff00" font-family='"Liberation Sans",sans-serif' textLength="15.4" lengthAdjust="spacingAndGlyphs">13</text>
<text x="758.7" y="270.9" font-size="12" fill="#ffff00" font-family='"Liberation Sans",sans-serif'>5</text>
<text x="631" y="293.9" font-size="7.8" fill="#ffffff" font-family='"Liberation Sans",sans-serif' textLength="8.2" lengthAdjust="spacingAndGlyphs" stroke="#ffffff" stroke-width="0.25">D4</text>
<text x="657.4" y="287.8" font-size="12" fill="#ffff00" font-family='"Liberation Sans",sans-serif'>4</text>
<text x="758.7" y="287.8" font-size="12" fill="#ffff00" font-family='"Liberation Sans",sans-serif'>7</text>
<text x="631" y="310.8" font-size="7.8" fill="#ffffff" font-family='"Liberation Sans",sans-serif' textLength="8.2" lengthAdjust="spacingAndGlyphs" stroke="#ffffff" stroke-width="0.25">D5</text>
<text x="657.4" y="304.7" font-size="12" fill="#ffff00" font-family='"Liberation Sans",sans-serif'>3</text>
<text x="758.7" y="304.7" font-size="12" fill="#ffff00" font-family='"Liberation Sans",sans-serif'>8</text>
<text x="631" y="327.7" font-size="7.8" fill="#ffffff" font-family='"Liberation Sans",sans-serif' textLength="8.2" lengthAdjust="spacingAndGlyphs" stroke="#ffffff" stroke-width="0.25">D6</text>
<text x="657.4" y="321.6" font-size="12" fill="#ffff00" font-family='"Liberation Sans",sans-serif'>2</text>
<text x="758.7" y="321.6" font-size="12" fill="#ffff00" font-family='"Liberation Sans",sans-serif'>9</text>
<text x="631" y="344.6" font-size="7.8" fill="#ffffff" font-family='"Liberation Sans",sans-serif' textLength="8.2" lengthAdjust="spacingAndGlyphs" stroke="#ffffff" stroke-width="0.25">D7</text>
<text x="657.4" y="338.5" font-size="12" fill="#ffff00" font-family='"Liberation Sans",sans-serif'>1</text>
<text x="750.3" y="338.5" font-size="12" fill="#ffff00" font-family='"Liberation Sans",sans-serif' textLength="15.2" lengthAdjust="spacingAndGlyphs">10</text>
<text x="508.7" y="451.2" font-size="12" fill="#00ff00" font-family='"Liberation Sans",sans-serif' textLength="33" lengthAdjust="spacingAndGlyphs" transform="rotate(-90 508.7 451.2)">AGND</text>
<text x="525" y="451.2" font-size="12" fill="#00ff00" font-family='"Liberation Sans",sans-serif' textLength="33" lengthAdjust="spacingAndGlyphs" transform="rotate(-90 525 451.2)">AGND</text>
<text x="560.2" y="451.2" font-size="12" fill="#00ff00" font-family='"Liberation Sans",sans-serif' textLength="33" lengthAdjust="spacingAndGlyphs" transform="rotate(-90 560.2 451.2)">DGND</text>
<text x="576.6" y="451.2" font-size="12" fill="#00ff00" font-family='"Liberation Sans",sans-serif' textLength="33" lengthAdjust="spacingAndGlyphs" transform="rotate(-90 576.6 451.2)">DGND</text>
<text x="601.7" y="451.2" font-size="12" fill="#00ff00" font-family='"Liberation Sans",sans-serif' textLength="21.5" lengthAdjust="spacingAndGlyphs" transform="rotate(-90 601.7 451.2)">VEE</text>
<text x="618" y="451.2" font-size="12" fill="#00ff00" font-family='"Liberation Sans",sans-serif' textLength="21.5" lengthAdjust="spacingAndGlyphs" transform="rotate(-90 618 451.2)">VEE</text>
<text x="635" y="451.2" font-size="12" fill="#00ff00" font-family='"Liberation Sans",sans-serif' textLength="21.5" lengthAdjust="spacingAndGlyphs" transform="rotate(-90 635 451.2)">VEE</text>
<text x="506" y="472.8" font-size="12" fill="#ffff00" font-family='"Liberation Sans",sans-serif' textLength="15.6" lengthAdjust="spacingAndGlyphs">25</text>
<text x="523.8" y="472.8" font-size="12" fill="#ffff00" font-family='"Liberation Sans",sans-serif' textLength="14.2" lengthAdjust="spacingAndGlyphs">19</text>
<text x="557" y="472.8" font-size="12" fill="#ffff00" font-family='"Liberation Sans",sans-serif'>5</text>
<text x="575" y="472.8" font-size="12" fill="#ffff00" font-family='"Liberation Sans",sans-serif' textLength="11.7" lengthAdjust="spacingAndGlyphs">11</text>
<text x="601.2" y="472.8" font-size="12" fill="#ffff00" font-family='"Liberation Sans",sans-serif'>9</text>
<text x="618" y="472.8" font-size="12" fill="#ffff00" font-family='"Liberation Sans",sans-serif'>8</text>
<text x="634.5" y="472.8" font-size="12" fill="#ffff00" font-family='"Liberation Sans",sans-serif'>7</text>
<text x="384.3" y="212.4" font-size="12" fill="#ffff00" font-family='"Liberation Sans",sans-serif' textLength="24.6" lengthAdjust="spacingAndGlyphs">+5V</text>
<text x="418.5" y="222" font-size="12" fill="#ffff00" font-family='"Liberation Sans",sans-serif' textLength="31.5" lengthAdjust="spacingAndGlyphs">R812</text>
<text x="418.5" y="234.3" font-size="12" fill="#ffff00" font-family='"Liberation Sans",sans-serif' textLength="27.3" lengthAdjust="spacingAndGlyphs">1.0K</text>
<text x="357.8" y="291" font-size="10.5" fill="#ffff00" font-family='"Liberation Sans",sans-serif' textLength="7.4" lengthAdjust="spacingAndGlyphs">A</text>
<text x="383.3" y="314.6" font-size="12" fill="#ffff00" font-family='"Liberation Sans",sans-serif' textLength="13.7" lengthAdjust="spacingAndGlyphs" transform="rotate(-90 383.3 314.6)">D2</text>
<text x="414.5" y="357.4" font-size="12" fill="#ffff00" font-family='"Liberation Sans",sans-serif' textLength="72.8" lengthAdjust="spacingAndGlyphs" transform="rotate(-90 414.5 357.4)">MBRS120T3</text>
<text x="334.2" y="323.2" font-size="12" fill="#ffff00" font-family='"Liberation Sans",sans-serif' textLength="30.8" lengthAdjust="spacingAndGlyphs">R861</text>
<text x="334.2" y="335.5" font-size="12" fill="#ffff00" font-family='"Liberation Sans",sans-serif' textLength="26.8" lengthAdjust="spacingAndGlyphs">10.0</text>
<text x="364.8" y="508.6" font-size="12" fill="#00ff00" font-family='"Liberation Sans",sans-serif' textLength="22.8" lengthAdjust="spacingAndGlyphs" transform="rotate(-90 364.8 508.6)">075</text>
<text x="352" y="472.6" font-size="12" fill="#ffff00" font-family='"Liberation Sans",sans-serif'>1</text>
<text x="340.8" y="552" font-size="10.5" fill="#ffff00" font-family='"Liberation Sans",sans-serif' textLength="7.4" lengthAdjust="spacingAndGlyphs">A</text>
<text x="345.2" y="495.5" font-size="12" fill="#ffff00" font-family='"Liberation Sans",sans-serif'>5</text>
<text x="370.7" y="495.5" font-size="12" fill="#ffff00" font-family='"Liberation Sans",sans-serif'>3</text>
<text x="343.6" y="511.2" font-size="12" fill="#ffff00" font-family='"Liberation Sans",sans-serif'>4</text>
<text x="369.8" y="511.2" font-size="12" fill="#ffff00" font-family='"Liberation Sans",sans-serif'>2</text>
<text x="339.7" y="521.7" font-size="12" fill="#ffff00" font-family='"Liberation Sans",sans-serif' textLength="29.2" lengthAdjust="spacingAndGlyphs">TP54</text>
<text x="360.8" y="549.4" font-size="9.5" fill="#00ff00" font-family='"Liberation Sans",sans-serif' textLength="29.2" lengthAdjust="spacingAndGlyphs">PIXEL</text>
<text x="360.8" y="559.75" font-size="9.5" fill="#00ff00" font-family='"Liberation Sans",sans-serif' textLength="79.2" lengthAdjust="spacingAndGlyphs">GAIN &amp; OFFSET</text>
<text x="360.8" y="570.1" font-size="9.5" fill="#00ff00" font-family='"Liberation Sans",sans-serif' textLength="63.2" lengthAdjust="spacingAndGlyphs">CORRECTED</text>
<text x="360.8" y="580.45" font-size="9.5" fill="#00ff00" font-family='"Liberation Sans",sans-serif' textLength="31" lengthAdjust="spacingAndGlyphs">VIDEO</text>
<text x="509.8" y="552" font-size="10.5" fill="#ffff00" font-family='"Liberation Sans",sans-serif' textLength="7.4" lengthAdjust="spacingAndGlyphs">A</text>
<text x="520.3" y="508.7" font-size="12" fill="#ffff00" font-family='"Liberation Sans",sans-serif' textLength="31" lengthAdjust="spacingAndGlyphs">R811</text>
<text x="520.3" y="521.7" font-size="12" fill="#ffff00" font-family='"Liberation Sans",sans-serif'>0</text>
<text x="719.1" y="521.2" font-size="12" fill="#ffff00" font-family='"Liberation Sans",sans-serif' textLength="8.6" lengthAdjust="spacingAndGlyphs">-</text>
<text x="729.9" y="521.2" font-size="12" fill="#ffff00" font-family='"Liberation Sans",sans-serif' textLength="25.6" lengthAdjust="spacingAndGlyphs">5VID</text>
<text x="602.8" y="552" font-size="10.5" fill="#ffff00" font-family='"Liberation Sans",sans-serif' textLength="7.4" lengthAdjust="spacingAndGlyphs">A</text>
<text x="695.8" y="552" font-size="10.5" fill="#ffff00" font-family='"Liberation Sans",sans-serif' textLength="7.4" lengthAdjust="spacingAndGlyphs">A</text>
<text x="608" y="512.2" font-size="12" fill="#ffff00" font-family='"Liberation Sans",sans-serif' textLength="34.8" lengthAdjust="spacingAndGlyphs">C683</text>
<text x="642.8" y="510.6" font-size="12" fill="#ffff00" font-family='"Liberation Sans",sans-serif' textLength="34.8" lengthAdjust="spacingAndGlyphs">6.8UF</text>
<text x="608" y="524.5" font-size="12" fill="#ffff00" font-family='"Liberation Sans",sans-serif' textLength="33.8" lengthAdjust="spacingAndGlyphs">0.1UF</text>
<text x="654.4" y="522.2" font-size="12" fill="#ffff00" font-family='"Liberation Sans",sans-serif' textLength="23.2" lengthAdjust="spacingAndGlyphs">C52</text>
<text x="514.6" y="605.3" font-size="12" fill="#ffff00" font-family='"Liberation Sans",sans-serif' textLength="8.6" lengthAdjust="spacingAndGlyphs">-</text>
<text x="525.4" y="605.3" font-size="12" fill="#ffff00" font-family='"Liberation Sans",sans-serif' textLength="34.5" lengthAdjust="spacingAndGlyphs">2.00V</text>
<text x="467.8" y="637" font-size="10.5" fill="#ffff00" font-family='"Liberation Sans",sans-serif' textLength="7.4" lengthAdjust="spacingAndGlyphs">A</text>
<text x="473" y="597.6" font-size="12" fill="#ffff00" font-family='"Liberation Sans",sans-serif' textLength="32.2" lengthAdjust="spacingAndGlyphs">C707</text>
<text x="473" y="609.5" font-size="12" fill="#ffff00" font-family='"Liberation Sans",sans-serif' textLength="35.2" lengthAdjust="spacingAndGlyphs">0.1UF</text>
<text x="775.8" y="77.5" font-size="12" fill="#ffff00" font-family='"Liberation Sans",sans-serif' textLength="22.8" lengthAdjust="spacingAndGlyphs">U77</text>
<text x="699.3" y="136.7" font-size="10.5" fill="#ffffff" font-family='"Liberation Sans",sans-serif' textLength="25.5" lengthAdjust="spacingAndGlyphs">JTAG</text>
<text x="725" y="137.6" font-size="12" fill="#ffffff" font-family='"Liberation Sans",sans-serif' textLength="17.5" lengthAdjust="spacingAndGlyphs">[7]</text>
<text x="699.3" y="153.4" font-size="10.5" fill="#ffffff" font-family='"Liberation Sans",sans-serif' textLength="25.5" lengthAdjust="spacingAndGlyphs">JTAG</text>
<text x="725" y="154.3" font-size="12" fill="#ffffff" font-family='"Liberation Sans",sans-serif' textLength="25.3" lengthAdjust="spacingAndGlyphs">[15]</text>
<text x="751.5" y="136.3" font-size="12" fill="#ffff00" font-family='"Liberation Sans",sans-serif' textLength="13.7" lengthAdjust="spacingAndGlyphs">13</text>
<text x="751.5" y="153.3" font-size="12" fill="#ffff00" font-family='"Liberation Sans",sans-serif' textLength="13.7" lengthAdjust="spacingAndGlyphs">12</text>
<text x="751.5" y="168.8" font-size="12" fill="#ffff00" font-family='"Liberation Sans",sans-serif' textLength="13.7" lengthAdjust="spacingAndGlyphs">14</text>
<text x="760" y="92.7" font-size="12" fill="#ffff00" font-family='"Liberation Sans",sans-serif'>1</text>
<text x="751.5" y="110" font-size="12" fill="#ffff00" font-family='"Liberation Sans",sans-serif' textLength="13.7" lengthAdjust="spacingAndGlyphs">24</text>
<text x="872.6" y="90" font-size="12" fill="#ffff00" font-family='"Liberation Sans",sans-serif' textLength="29.8" lengthAdjust="spacingAndGlyphs" transform="rotate(-90 872.6 90)">R814</text>
<text x="899" y="90" font-size="12" fill="#ffff00" font-family='"Liberation Sans",sans-serif' textLength="31" lengthAdjust="spacingAndGlyphs" transform="rotate(-90 899 90)">R813</text>
<text x="733.6" y="31.3" font-size="11" fill="#00ff00" font-family='"Liberation Sans",sans-serif' textLength="91" lengthAdjust="spacingAndGlyphs">DIR=0; B--&gt;A</text>
<text x="733.6" y="43.1" font-size="11" fill="#00ff00" font-family='"Liberation Sans",sans-serif' textLength="91" lengthAdjust="spacingAndGlyphs">DIR=1; B&lt;--A</text>
<text x="915.3" y="82.7" font-size="12" fill="#ffff00" font-family='"Liberation Sans",sans-serif'>2</text>
<text x="783.4" y="98.9" font-size="7.8" fill="#ffffff" font-family='"Liberation Sans",sans-serif' textLength="9.2" lengthAdjust="spacingAndGlyphs" stroke="#ffffff" stroke-width="0.25">DIR</text>
<text x="783.4" y="115.8" font-size="7.8" fill="#ffffff" font-family='"Liberation Sans",sans-serif' textLength="6.5" lengthAdjust="spacingAndGlyphs" stroke="#ffffff" stroke-width="0.25">OE</text>
<text x="783.4" y="141.8" font-size="7.8" fill="#ffffff" font-family='"Liberation Sans",sans-serif' textLength="11" lengthAdjust="spacingAndGlyphs" stroke="#ffffff" stroke-width="0.25">TCK</text>
<text x="783.4" y="158.8" font-size="7.8" fill="#ffffff" font-family='"Liberation Sans",sans-serif' textLength="12" lengthAdjust="spacingAndGlyphs" stroke="#ffffff" stroke-width="0.25">TMS</text>
<text x="783.4" y="174.9" font-size="7.8" fill="#ffffff" font-family='"Liberation Sans",sans-serif' textLength="8.5" lengthAdjust="spacingAndGlyphs" stroke="#ffffff" stroke-width="0.25">TDI</text>
<text x="821.4" y="175.3" font-size="7.8" fill="#ffffff" font-family='"Liberation Sans",sans-serif' textLength="12.2" lengthAdjust="spacingAndGlyphs" stroke="#ffffff" stroke-width="0.25">TDO</text>
<text x="849" y="168.8" font-size="12" fill="#ffff00" font-family='"Liberation Sans",sans-serif' textLength="13.4" lengthAdjust="spacingAndGlyphs">11</text>
<text x="875.7" y="154.3" font-size="12" fill="#ffff00" font-family='"Liberation Sans",sans-serif' textLength="31.5" lengthAdjust="spacingAndGlyphs">R760</text>
<text x="875.5" y="166.5" font-size="12" fill="#ffff00" font-family='"Liberation Sans",sans-serif' textLength="26.5" lengthAdjust="spacingAndGlyphs">22.0</text>
<text x="976.8" y="168.2" font-size="10" fill="#ffffff" font-family='"Liberation Sans",sans-serif' textLength="43.5" lengthAdjust="spacingAndGlyphs">VC_TDO</text>
<text x="1063.2" y="177.2" font-size="14.5" fill="#ffff00" font-family='"Liberation Sans",sans-serif' textLength="19.4" lengthAdjust="spacingAndGlyphs" stroke="#000" stroke-width="0.15">17</text>
<text x="783.8" y="225.9" font-size="7.8" fill="#ffffff" font-family='"Liberation Sans",sans-serif' textLength="8.2" lengthAdjust="spacingAndGlyphs" stroke="#ffffff" stroke-width="0.25">B0</text>
<text x="825.6" y="225.9" font-size="7.8" fill="#ffffff" font-family='"Liberation Sans",sans-serif' textLength="8.4" lengthAdjust="spacingAndGlyphs" stroke="#ffffff" stroke-width="0.25">A0</text>
<text x="849" y="220.2" font-size="12" fill="#ffff00" font-family='"Liberation Sans",sans-serif' textLength="13.4" lengthAdjust="spacingAndGlyphs">23</text>
<text x="875.7" y="219.9" font-size="10.2" fill="#ffffff" font-family='"Liberation Sans",sans-serif' textLength="43.5" lengthAdjust="spacingAndGlyphs">CMDATA</text>
<text x="919.2" y="220.8" font-size="12" fill="#ffffff" font-family='"Liberation Sans",sans-serif' textLength="18.2" lengthAdjust="spacingAndGlyphs">[0]</text>
<text x="783.8" y="242.8" font-size="7.8" fill="#ffffff" font-family='"Liberation Sans",sans-serif' textLength="8.2" lengthAdjust="spacingAndGlyphs" stroke="#ffffff" stroke-width="0.25">B1</text>
<text x="825.6" y="242.8" font-size="7.8" fill="#ffffff" font-family='"Liberation Sans",sans-serif' textLength="8.4" lengthAdjust="spacingAndGlyphs" stroke="#ffffff" stroke-width="0.25">A1</text>
<text x="849" y="237.1" font-size="12" fill="#ffff00" font-family='"Liberation Sans",sans-serif' textLength="13.4" lengthAdjust="spacingAndGlyphs">22</text>
<text x="875.7" y="236.8" font-size="10.2" fill="#ffffff" font-family='"Liberation Sans",sans-serif' textLength="43.5" lengthAdjust="spacingAndGlyphs">CMDATA</text>
<text x="919.2" y="237.7" font-size="12" fill="#ffffff" font-family='"Liberation Sans",sans-serif' textLength="18.2" lengthAdjust="spacingAndGlyphs">[1]</text>
<text x="783.8" y="259.7" font-size="7.8" fill="#ffffff" font-family='"Liberation Sans",sans-serif' textLength="8.2" lengthAdjust="spacingAndGlyphs" stroke="#ffffff" stroke-width="0.25">B2</text>
<text x="825.6" y="259.7" font-size="7.8" fill="#ffffff" font-family='"Liberation Sans",sans-serif' textLength="8.4" lengthAdjust="spacingAndGlyphs" stroke="#ffffff" stroke-width="0.25">A2</text>
<text x="849" y="254" font-size="12" fill="#ffff00" font-family='"Liberation Sans",sans-serif' textLength="13.4" lengthAdjust="spacingAndGlyphs">21</text>
<text x="875.7" y="253.7" font-size="10.2" fill="#ffffff" font-family='"Liberation Sans",sans-serif' textLength="43.5" lengthAdjust="spacingAndGlyphs">CMDATA</text>
<text x="919.2" y="254.6" font-size="12" fill="#ffffff" font-family='"Liberation Sans",sans-serif' textLength="18.2" lengthAdjust="spacingAndGlyphs">[2]</text>
<text x="783.8" y="276.6" font-size="7.8" fill="#ffffff" font-family='"Liberation Sans",sans-serif' textLength="8.2" lengthAdjust="spacingAndGlyphs" stroke="#ffffff" stroke-width="0.25">B3</text>
<text x="825.6" y="276.6" font-size="7.8" fill="#ffffff" font-family='"Liberation Sans",sans-serif' textLength="8.4" lengthAdjust="spacingAndGlyphs" stroke="#ffffff" stroke-width="0.25">A3</text>
<text x="849" y="270.9" font-size="12" fill="#ffff00" font-family='"Liberation Sans",sans-serif' textLength="13.4" lengthAdjust="spacingAndGlyphs">20</text>
<text x="875.7" y="270.6" font-size="10.2" fill="#ffffff" font-family='"Liberation Sans",sans-serif' textLength="43.5" lengthAdjust="spacingAndGlyphs">CMDATA</text>
<text x="919.2" y="271.5" font-size="12" fill="#ffffff" font-family='"Liberation Sans",sans-serif' textLength="18.2" lengthAdjust="spacingAndGlyphs">[3]</text>
<text x="783.8" y="293.5" font-size="7.8" fill="#ffffff" font-family='"Liberation Sans",sans-serif' textLength="8.2" lengthAdjust="spacingAndGlyphs" stroke="#ffffff" stroke-width="0.25">B4</text>
<text x="825.6" y="293.5" font-size="7.8" fill="#ffffff" font-family='"Liberation Sans",sans-serif' textLength="8.4" lengthAdjust="spacingAndGlyphs" stroke="#ffffff" stroke-width="0.25">A4</text>
<text x="849" y="287.8" font-size="12" fill="#ffff00" font-family='"Liberation Sans",sans-serif' textLength="13.4" lengthAdjust="spacingAndGlyphs">19</text>
<text x="875.7" y="287.5" font-size="10.2" fill="#ffffff" font-family='"Liberation Sans",sans-serif' textLength="43.5" lengthAdjust="spacingAndGlyphs">CMDATA</text>
<text x="919.2" y="288.4" font-size="12" fill="#ffffff" font-family='"Liberation Sans",sans-serif' textLength="18.2" lengthAdjust="spacingAndGlyphs">[4]</text>
<text x="783.8" y="310.4" font-size="7.8" fill="#ffffff" font-family='"Liberation Sans",sans-serif' textLength="8.2" lengthAdjust="spacingAndGlyphs" stroke="#ffffff" stroke-width="0.25">B5</text>
<text x="825.6" y="310.4" font-size="7.8" fill="#ffffff" font-family='"Liberation Sans",sans-serif' textLength="8.4" lengthAdjust="spacingAndGlyphs" stroke="#ffffff" stroke-width="0.25">A5</text>
<text x="849" y="304.7" font-size="12" fill="#ffff00" font-family='"Liberation Sans",sans-serif' textLength="13.4" lengthAdjust="spacingAndGlyphs">17</text>
<text x="875.7" y="304.4" font-size="10.2" fill="#ffffff" font-family='"Liberation Sans",sans-serif' textLength="43.5" lengthAdjust="spacingAndGlyphs">CMDATA</text>
<text x="919.2" y="305.3" font-size="12" fill="#ffffff" font-family='"Liberation Sans",sans-serif' textLength="18.2" lengthAdjust="spacingAndGlyphs">[5]</text>
<text x="783.8" y="327.3" font-size="7.8" fill="#ffffff" font-family='"Liberation Sans",sans-serif' textLength="8.2" lengthAdjust="spacingAndGlyphs" stroke="#ffffff" stroke-width="0.25">B6</text>
<text x="825.6" y="327.3" font-size="7.8" fill="#ffffff" font-family='"Liberation Sans",sans-serif' textLength="8.4" lengthAdjust="spacingAndGlyphs" stroke="#ffffff" stroke-width="0.25">A6</text>
<text x="849" y="321.6" font-size="12" fill="#ffff00" font-family='"Liberation Sans",sans-serif' textLength="13.4" lengthAdjust="spacingAndGlyphs">16</text>
<text x="875.7" y="321.3" font-size="10.2" fill="#ffffff" font-family='"Liberation Sans",sans-serif' textLength="43.5" lengthAdjust="spacingAndGlyphs">CMDATA</text>
<text x="919.2" y="322.2" font-size="12" fill="#ffffff" font-family='"Liberation Sans",sans-serif' textLength="18.2" lengthAdjust="spacingAndGlyphs">[6]</text>
<text x="783.8" y="344.2" font-size="7.8" fill="#ffffff" font-family='"Liberation Sans",sans-serif' textLength="8.2" lengthAdjust="spacingAndGlyphs" stroke="#ffffff" stroke-width="0.25">B7</text>
<text x="825.6" y="344.2" font-size="7.8" fill="#ffffff" font-family='"Liberation Sans",sans-serif' textLength="8.4" lengthAdjust="spacingAndGlyphs" stroke="#ffffff" stroke-width="0.25">A7</text>
<text x="849" y="338.5" font-size="12" fill="#ffff00" font-family='"Liberation Sans",sans-serif' textLength="13.4" lengthAdjust="spacingAndGlyphs">15</text>
<text x="875.7" y="338.2" font-size="10.2" fill="#ffffff" font-family='"Liberation Sans",sans-serif' textLength="43.5" lengthAdjust="spacingAndGlyphs">CMDATA</text>
<text x="919.2" y="339.1" font-size="12" fill="#ffffff" font-family='"Liberation Sans",sans-serif' textLength="18.2" lengthAdjust="spacingAndGlyphs">[7]</text>
<text x="774.8" y="369.7" font-size="12" fill="#ffff00" font-family='"Liberation Sans",sans-serif' textLength="72" lengthAdjust="spacingAndGlyphs">74ABT8245</text>
<text x="775.4" y="383.3" font-size="7.5" fill="#00ff00" font-family='"Liberation Sans",sans-serif' textLength="62" lengthAdjust="spacingAndGlyphs" stroke="#00ff00" stroke-width="0.25">8-BIT TRANSCEIVER</text>
<text x="961" y="379.3" font-size="10.2" fill="#ffffff" font-family='"Liberation Sans",sans-serif' textLength="42.5" lengthAdjust="spacingAndGlyphs">CMDATA</text>
<text x="1003.5" y="380.3" font-size="12" fill="#ffffff" font-family='"Liberation Sans",sans-serif' textLength="28.5" lengthAdjust="spacingAndGlyphs">[7:0]</text>
<text x="1063" y="388.2" font-size="14.5" fill="#ffff00" font-family='"Liberation Sans",sans-serif' textLength="85.3" lengthAdjust="spacingAndGlyphs" stroke="#000" stroke-width="0.15">9,14,18,23</text>
<text x="978.5" y="286.9" font-size="14" fill="#00ff00" font-family='"Liberation Sans",sans-serif' textLength="35" lengthAdjust="spacingAndGlyphs" stroke="#000" stroke-width="0.15">Pixel</text>
<text x="978.5" y="300.65" font-size="14" fill="#00ff00" font-family='"Liberation Sans",sans-serif' textLength="102" lengthAdjust="spacingAndGlyphs" stroke="#000" stroke-width="0.15">Gain &amp; Offset</text>
<text x="978.5" y="314.4" font-size="14" fill="#00ff00" font-family='"Liberation Sans",sans-serif' textLength="74.2" lengthAdjust="spacingAndGlyphs" stroke="#000" stroke-width="0.15">corrected</text>
<text x="978.5" y="328.15" font-size="14" fill="#00ff00" font-family='"Liberation Sans",sans-serif' textLength="98.5" lengthAdjust="spacingAndGlyphs" stroke="#000" stroke-width="0.15">camera data</text>
</svg>
</body></html>
